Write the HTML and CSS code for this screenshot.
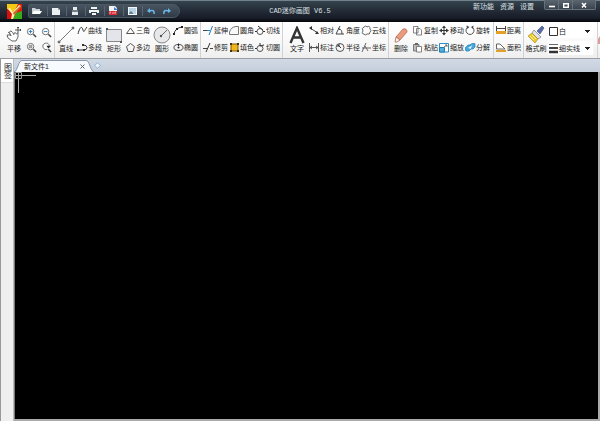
FILE: index.html
```html
<!DOCTYPE html>
<html lang="zh-CN">
<head>
<meta charset="utf-8">
<title>CAD迷你画图 V6.5</title>
<link rel="stylesheet" href="styles.css">
</head>
<body>
<header class="titlebar">
  <div class="quick">
    <svg class="logo" viewBox="0 0 15 15" aria-hidden="true"><rect width="15" height="15" fill="#e01b10"/><path d="M0 0H11L7 8L0 5Z" fill="#f5c911"/><path d="M0 5L7 9L5 15H0Z" fill="#d80f0b"/><path d="M15 7V15H6L9 9Z" fill="#38a818"/><path d="M1 5L3 4L6 8L12 1L14 2L8 10L6 15H4L5 10Z" fill="#fff3b0"/><path d="M6 9L13 2L14 3L7 11Z" fill="#c66a22"/></svg>
    <nav class="pill" aria-label="快速访问">
      <button aria-label="打开"><svg viewBox="0 0 12 10"><path d="M1 8V2H4L5 3H9V5" fill="#cbd2d8"/><path d="M1 8L3 5H11L9 8Z" fill="#fff"/></svg></button>
      <button aria-label="新建"><svg viewBox="0 0 12 10"><path d="M2 2H8L10 4V9H2Z" fill="#eceff1"/><path d="M8 2V4H10" fill="#9aa3ab"/></svg></button>
      <button aria-label="保存"><svg viewBox="0 0 12 10"><path d="M4 1H8V4H4ZM3 6H9V9H3Z" fill="#e6eaed"/><path d="M3 4H9V6H3Z" fill="#737f89"/></svg></button>
      <button aria-label="打印"><svg viewBox="0 0 12 10"><path d="M3 1H9V3H3ZM1 4H11V7H9V6H3V7H1ZM4 7H8V9H4Z" fill="#f1f4f5"/></svg></button>
      <button aria-label="导出PDF"><svg viewBox="0 0 12 10"><path d="M2 0H8L10 2V9H2Z" fill="#f2f3f5"/><path d="M7 1L11 4H7Z" fill="#4a7bd0"/><path d="M2 5H10V9H2Z" fill="#dd2931"/><path d="M3 8V6H4M6 6V8M8 8V6H9" stroke="#fff" fill="none" stroke-width=".6"/></svg></button>
      <button aria-label="导出图片"><svg viewBox="0 0 12 10"><path d="M2 1H11V9H2Z" fill="#f3f6f8"/><path d="M3 2H10V8H3Z" fill="#b8d3e3"/><path d="M3 7L5 5L7 7V8H3Z" fill="#668394"/></svg></button>
      <button aria-label="撤销"><svg viewBox="0 0 12 10"><path d="M9 8Q10 3 4 5" stroke="#69b8ec" stroke-width="1.6" fill="none"/><path d="M2 5L5 2V7Z" fill="#69b8ec"/></svg></button>
      <button aria-label="重做"><svg viewBox="0 0 12 10"><path d="M3 8Q2 3 8 5" stroke="#69b8ec" stroke-width="1.6" fill="none"/><path d="M10 5L7 2V7Z" fill="#69b8ec"/></svg></button>
    </nav>
  </div>
  <h1>CAD迷你画图 V6.5</h1>
  <div class="right">
    <nav class="links"><a href="#new">新功能</a><a href="#res">资源</a><a href="#set">设置</a></nav>
    <div class="window">
      <button aria-label="最小化"><svg viewBox="0 0 10 8"><path d="M2 5.5H8" stroke="#fff" stroke-width="1.6"/></svg></button>
      <button aria-label="最大化"><svg viewBox="0 0 10 8"><path d="M2.7 2.7H7.3V6.3H2.7Z" stroke="#fff" stroke-width="1.4" fill="none"/></svg></button>
      <button class="close" aria-label="关闭"><svg viewBox="0 0 10 8"><path d="M3 2L7 6.5M7 2L3 6.5" stroke="#fff" stroke-width="1.5"/></svg></button>
    </div>
  </div>
</header>

<section class="ribbon" aria-label="工具栏">
  <div class="group view">
    <button class="big"><svg viewBox="0 0 18 18"><path d="M3 6Q5 7 6 10Q3 5 6 5Q8 6 9 9M9 8Q9 6 11 7M11 8L13 7V11L11 15H7L3 12L2 9L5 9" fill="#fff" stroke="#666"/><path d="M13 1V7M10 4H16M12 2L13 1L14 2M15 3L16 4L15 5" fill="none" stroke="#444" stroke-width=".9"/></svg><span>平移</span></button>
    <div class="zooms">
      <button aria-label="放大"><svg viewBox="0 0 12 12"><circle cx="5" cy="5" r="3.5" fill="#fff" stroke="#666"/><path d="M3 5H7M5 3V7" stroke="#2773ad"/><path d="M8 8L11 11" stroke="#444" stroke-width="1.6"/></svg></button>
      <button aria-label="缩小"><svg viewBox="0 0 12 12"><circle cx="5" cy="5" r="3.5" fill="#fff" stroke="#666"/><path d="M3 5H7" stroke="#2773ad"/><path d="M8 8L11 11" stroke="#444" stroke-width="1.6"/></svg></button>
      <button aria-label="窗口缩放"><svg viewBox="0 0 12 12"><circle cx="5" cy="5" r="3.5" fill="#fff" stroke="#666"/><path d="M3.5 3.5H6.5V6.5H3.5Z" fill="#aaa" stroke="#777" stroke-width=".6"/><path d="M8 8L11 11" stroke="#444" stroke-width="1.6"/></svg></button>
      <button aria-label="上次视图"><svg viewBox="0 0 12 12"><path d="M7 8A3.5 3.5 0 1 1 9 4" fill="#fff" stroke="#666"/><path d="M6 4L11 4L8 7Z" fill="#222"/><path d="M8 8L11 11" stroke="#444" stroke-width="1.6"/></svg></button>
    </div>
  </div>

  <div class="group draw">
    <button class="big"><svg viewBox="0 0 18 18"><path d="M2 16L16 2" stroke="#777"/><path d="M1 15H3V17H1ZM15 1H17V3H15Z" fill="#777" stroke="#666" stroke-width=".5"/></svg><span>直线</span></button>
    <div class="stack">
      <button><svg viewBox="0 0 11 11"><path d="M1 9C3 1 5 1 6 5S8 4 10 2" fill="none" stroke="#333"/></svg>曲线</button>
      <button><svg viewBox="0 0 11 11"><path d="M1 8H7Q10 8 10 5.500T6 3" fill="none" stroke="#333"/><path d="M0 7H2V9H0ZM5 2H7V4H5ZM6 7H8V9H6Z" fill="#333"/></svg>多段</button>
    </div>
    <button class="big"><svg viewBox="0 0 18 18"><path d="M1.500 3.500H16.500V15.500H1.500Z" fill="#e3e5ea" stroke="#888"/><path d="M1 2H3V4H1ZM15 15H17V17H15Z" fill="#555"/></svg><span>矩形</span></button>
    <div class="stack">
      <button><svg viewBox="0 0 11 11"><path d="M1.500 8.500L5.500 3L9.500 8.500Z" fill="none" stroke="#555"/></svg>三角</button>
      <button><svg viewBox="0 0 11 11"><path d="M5.500 1.500L9.500 4.500L8 9.500H3L1.500 4.500Z" fill="none" stroke="#555"/></svg>多边</button>
    </div>
    <button class="big"><svg viewBox="0 0 18 18"><circle cx="9" cy="9" r="8" fill="#e6e8ea" stroke="#888"/><path d="M8 10L14 4" stroke="#666"/><circle cx="8" cy="10" r="1.2" fill="#555"/></svg><span>圆形</span></button>
    <div class="stack">
      <button><svg viewBox="0 0 11 11"><path d="M1 9Q2 3 9 2" fill="none" stroke="#333"/><path d="M0 8H2V10H0ZM3 3H5V5H3ZM8 1H10V3H8Z" fill="#222"/></svg>圆弧</button>
      <button><svg viewBox="0 0 11 11"><ellipse cx="5.500" cy="5.500" rx="4.500" ry="3" fill="none" stroke="#444"/><circle cx="5.500" cy="5.500" r="1" fill="#222"/><path d="M5.500 1.500V4" stroke="#222"/></svg>椭圆</button>
    </div>
  </div>

  <div class="group">
    <div class="stack">
      <button><svg viewBox="0 0 11 11"><path d="M0 5.500H4" stroke="#444"/><path d="M4 5.500H7" stroke="#1d8bd1"/><path d="M9.500 1L6 10" stroke="#1d7bc1"/></svg>延伸</button>
      <button><svg viewBox="0 0 11 11"><path d="M0 6.500H4M7 6.500H10" stroke="#444"/><path d="M7 1L3 10" stroke="#333"/></svg>修剪</button>
    </div>
    <div class="stack">
      <button><svg viewBox="0 0 11 11"><path d="M.5 9.500V7Q2 2 7 1.500H9.500V9.500Z" fill="#f8f8f8" stroke="#777"/></svg>圆角</button>
      <button><svg viewBox="0 0 11 11"><path d="M2 2H9V9H2Z" fill="#f1b51c" stroke="#7c5a09"/><path d="M1 1H3V3H1ZM8 1H10V3H8ZM1 8H3V10H1ZM8 8H10V10H8Z" fill="#443108"/></svg>填色</button>
    </div>
    <div class="stack">
      <button><svg viewBox="0 0 11 11"><circle cx="5" cy="6.500" r="3" fill="none" stroke="#555"/><path d="M3 1L8 5M8 6.500H10M0 6.500H2" stroke="#333" fill="none"/></svg>切线</button>
      <button><svg viewBox="0 0 11 11"><circle cx="5" cy="6.500" r="3" fill="none" stroke="#555"/><path d="M5 1V4L9 3M0 6.500H2" stroke="#333" fill="none"/></svg>切圆</button>
    </div>
  </div>

  <div class="group">
    <button class="big"><svg viewBox="0 0 18 18"><path d="M2.500 17L9 2L15.500 17M5 11.500H13" fill="none" stroke="#333" stroke-width="2.400"/></svg><span>文字</span></button>
    <div class="stack">
      <button><svg viewBox="0 0 11 11"><path d="M1 3L9 8" stroke="#444"/><path d="M0 3L3 1V5ZM10 9L6 9L8 6Z" fill="#333"/></svg>相对</button>
      <button><svg viewBox="0 0 11 11"><path d="M.5 1V10M9.500 1V10M1 5.500H9M3 4L1 5.500L3 7M7 4L9 5.500L7 7" fill="none" stroke="#444" stroke-width=".9"/></svg>标注</button>
    </div>
    <div class="stack">
      <button><svg viewBox="0 0 11 11"><path d="M5 1L1 9H9M4 4Q7 4 7 9M3 3L5 5" fill="none" stroke="#444"/></svg>角度</button>
      <button><svg viewBox="0 0 11 11"><circle cx="5" cy="5.500" r="4" fill="none" stroke="#555"/><path d="M6 6L3 3M3 5V3H5" fill="none" stroke="#333"/></svg>半径</button>
    </div>
    <div class="stack">
      <button><svg viewBox="0 0 11 11"><path d="M3 2Q5 0 6 2Q9 0 9 4Q11 6 9 7Q9 10 6 9Q4 11 3 9Q0 9 2 6Q0 3 3 2Z" fill="none" stroke="#666"/></svg>云线</button>
      <button><svg viewBox="0 0 11 11"><path d="M5 1L1 10M1 6H10M4 4L7 9" fill="none" stroke="#666"/></svg>坐标</button>
    </div>
  </div>

  <div class="group edit">
    <button class="big"><svg viewBox="0 0 18 18"><path d="M4 11L11 3Q15 2 15 6L8 14Z" fill="#eb9b7d" stroke="#b56b55" stroke-width=".8"/><path d="M4 11L8 14L5 16H3Z" fill="#fff3ec" stroke="#a56550" stroke-width=".8"/></svg><span>删除</span></button>
    <div class="stack">
      <button><svg viewBox="0 0 11 11"><path d="M.5 1.500H5V8H.5ZM3.500 3.500H7L8.500 5V10H3.500Z" fill="#fff" stroke="#666" stroke-width=".8"/></svg>复制</button>
      <button><svg viewBox="0 0 11 11"><path d="M.5 2.500H6V9H.5Z" fill="#bbb" stroke="#666" stroke-width=".8"/><path d="M2 1H5V3H2Z" fill="#666"/><path d="M3.500 4.500H8.500V10H3.500Z" fill="#fff" stroke="#666" stroke-width=".8"/></svg>粘贴</button>
    </div>
    <div class="stack">
      <button><svg viewBox="0 0 11 11"><path d="M5 2V9M2 5.500H8" stroke="#333"/><path d="M5 .5L7 3H3ZM5 10.500L7 8H3ZM0 5.500L3 3.500V7.500ZM10 5.500L7 3.500V7.500Z" fill="#333"/></svg>移动</button>
      <button><svg viewBox="0 0 11 11"><path d="M.5 1.500H9.500V10H.5Z" fill="#fff" stroke="#2f8fc4"/><path d="M.5 5.500H5.500V10H.5Z" fill="#4eb0df" stroke="#277ba9"/><path d="M5 5L8 3M6 3H8V5" fill="none" stroke="#555" stroke-width=".8"/></svg>缩放</button>
    </div>
    <div class="stack">
      <button><svg viewBox="0 0 11 11"><path d="M3 2A4 4 0 1 0 7 2" fill="none" stroke="#555"/><path d="M1.500 .5L4.500 2L2 4ZM8.500 .5L6 2L8 4Z" fill="#444"/></svg>旋转</button>
      <button><svg viewBox="0 0 11 11"><path d="M0 6L3 3H6V7L4 9H1ZM5 3L7 1.500H10V5L8 7H6Z" fill="#45a9df" stroke="#237eb1" stroke-width=".7"/><path d="M3 6L7 3L6 7Z" fill="#d9f3ff"/></svg>分解</button>
    </div>
  </div>

  <div class="group">
    <div class="stack">
      <button><svg viewBox="0 0 11 11"><path d="M.5 3.500H9.500M.5 1V6M9.500 1V6" stroke="#444"/><path d="M0 6H10V9H0Z" fill="#e3a027"/></svg>距离</button>
      <button><svg viewBox="0 0 11 11"><path d="M.5 7V2H4L9 7Z" fill="#fff" stroke="#666"/><path d="M0 8H10V10H0Z" fill="#e3a027"/></svg>面积</button>
    </div>
  </div>

  <div class="group format">
    <button class="big"><svg viewBox="0 0 18 18"><path d="M10 5L15 0L17 2L13 8Z" fill="#576ba5" stroke="#35477c" stroke-width=".6"/><path d="M7 4L14 11L11 13L5 7Z" fill="#dde2ed" stroke="#777" stroke-width=".7"/><path d="M5 7L11 13L8 17L1 10Z" fill="#efc928" stroke="#a18a31" stroke-width=".6"/><path d="M3 10L7 14M5 9L9 13" stroke="#fff195"/></svg><span>格式刷</span></button>
    <div class="picks">
      <label class="pick"><svg viewBox="0 0 11 11"><path d="M1.500 1.500H9.500V9.500H1.500Z" fill="#fff" stroke="#333"/></svg><select aria-label="颜色"><option>白</option></select></label>
      <label class="pick"><svg viewBox="0 0 11 11"><path d="M1 1.500H10" stroke="#666"/><path d="M1 5H10" stroke="#444" stroke-width="2"/><path d="M1 9H10" stroke="#333" stroke-width="2.500"/></svg><select aria-label="线型"><option>细实线</option></select></label>
    </div>
  </div>
  <div class="more"><svg viewBox="0 0 2 8" aria-hidden="true"><path d="M2 0V8H0V3Z" fill="#d6a095"/></svg></div>
</section>

<div class="workspace">
  <aside><button class="side">图签</button></aside>
  <main>
    <div class="tabs">
      <svg class="edge" viewBox="0 0 8 12" aria-hidden="true"><path d="M0 12Q2 12 4 6T8 .5V12Z" fill="#f7fafe"/><path d="M0 12Q2 12 4 6T8 .5" fill="none" stroke="#8b98a8"/></svg>
      <div class="tab"><span>新文件1</span><button aria-label="关闭标签"><svg viewBox="0 0 5 5"><path d="M.5 .5L4.500 4.500M4.500 .5L.5 4.500" stroke="#666"/></svg></button></div>
      <svg class="edge" viewBox="0 0 8 12" aria-hidden="true"><path d="M0 .5Q2 0 4 6T8 12H0Z" fill="#f7fafe"/><path d="M0 .5Q2 0 4 6T8 12" fill="none" stroke="#8b98a8"/></svg>
      <button class="add" aria-label="新建标签"><svg viewBox="0 0 7 7"><path d="M3.500 .7L6.300 3.500L3.500 6.300L.7 3.500Z" fill="#edf5ff" stroke="#91afd0"/></svg></button>
    </div>
    <div class="canvas">
      <svg class="cursor" viewBox="0 0 21 21" aria-hidden="true"><path d="M3.500 0V21M0 3.500H21" stroke="#aaa"/><path d="M.5 .5H6.500V6.500H.5Z" fill="none" stroke="#999"/></svg>
    </div>
  </main>
</div>
</body>
</html>
```

FILE: styles.css
```css
* { box-sizing: border-box; }
body {
  margin: 0;
  min-height: 100vh;
  display: flex;
  flex-direction: column;
  background: #f0f0f0;
  color: #222;
  font: 7px/9px "Liberation Sans", "Noto Sans CJK SC", sans-serif;
}
button, select {
  margin: 0;
  padding: 0;
  border: 0;
  background: none;
  color: inherit;
  font: inherit;
}
svg { display: block; flex: none; }

.titlebar {
  height: 22px;
  display: grid;
  grid-template-columns: 1fr auto 1fr;
  background: linear-gradient(#71828d 0 1px, #34434d 1px, #252d38 45%, #191e29 80%, #05070a);
  color: #dde2e6;
}
.titlebar h1 {
  margin: 0;
  font: 7px/22px "Liberation Mono", "Noto Sans CJK SC", monospace;
}
.quick { display: flex; align-items: flex-start; padding: 4px 0 0 7px; gap: 6px; }
.logo { width: 15px; height: 15px; }
.pill {
  display: flex;
  align-items: center;
  height: 14px;
  padding-right: 4px;
  border: 1px solid #4c5964;
  border-radius: 2px 7px 7px 2px;
  background: linear-gradient(#485561, #303a47);
}
.pill button { width: 16px; padding: 0 2px; }
.pill button:nth-child(-n+6) { width: 19px; padding: 0 3px 0 2px; border-right: 1px solid #596571; }
.pill svg { width: 12px; height: 10px; }
.right { display: flex; justify-content: flex-end; gap: 10px; padding-right: 4px; }
.links { display: flex; gap: 6px; padding-top: 2px; }
.links a { color: inherit; text-decoration: none; }
.window { display: flex; height: 10px; border: 1px solid #65717b; border-top: 0; border-radius: 0 0 2px 2px; background: linear-gradient(#5b6670, #39434d); }
.window button { width: 14px; padding: 0 2px; border-right: 1px solid #65717b; }
.window .close { width: 22px; padding: 0 6px; border: 0; }
.window svg { width: 10px; height: 8px; }

.ribbon {
  height: 37px;
  display: flex;
  overflow: hidden;
  background: linear-gradient(#fff, #f8f8f8 60%, #eee);
  border-bottom: 1px solid #9b9fa5;
}
.group { display: flex; flex: none; padding: 0 1px 0 2px; border-right: 1px solid #d2d2d2; }
.big {
  width: 24px;
  display: flex;
  flex-direction: column;
  align-items: center;
  padding-top: 4px;
  white-space: nowrap;
}
.big svg { width: 18px; height: 18px; }
.stack { width: 26px; display: grid; grid-template-rows: 17px 17px; }
.stack button { display: flex; align-items: center; white-space: nowrap; }
.stack svg { width: 11px; height: 11px; }
.view { padding-right: 0; }
.zooms { width: 28px; display: grid; grid-template: 15px 15px / 15px 13px; padding-top: 3px; }
.zooms svg { width: 11px; height: 11px; }
.draw { padding: 0 1px 0 0; }
.draw .big { width: 22px; }
.edit { padding: 0 2px 0 0; }
.format { flex: 1; padding: 0 4px 0 0; }
.picks { flex: 1; display: grid; grid-template-rows: 14px 14px; align-content: start; gap: 3px; padding-top: 2px; }
.pick { display: flex; align-items: center; background: #fff; }
.pick svg { width: 11px; height: 11px; }
.pick select {
  flex: 1;
  min-width: 0;
  height: 14px;
  appearance: none;
  background: conic-gradient(from 315deg at 50% 100%, #222 90deg, transparent 0) no-repeat right 3px center / 5px 3px;
}
.more { display: flex; align-items: center; width: 2px; }
.more svg { width: 2px; height: 8px; }

.workspace { flex: 1; display: flex; }
aside { width: 14px; border-left: 1px solid #999; border-right: 1px solid #bbb; background: #efefef; }
.side { display: block; width: 12px; height: 24px; background: #fff; border-bottom: 1px solid #ddd; font-size: 8px; writing-mode: vertical-rl; }
main { flex: 1; display: flex; flex-direction: column; padding: 0 2px 2px 0; background: #aaa; }
.tabs { display: flex; align-items: flex-end; height: 13px; margin-right: -2px; background: linear-gradient(#d1d9e4, #c4ceda); }
.edge { width: 8px; height: 12px; }
.tab { display: flex; align-items: center; justify-content: space-between; width: 64px; height: 12px; padding: 0 1px 0 2px; border-top: 1px solid #8b98a8; background: #f7fafe; }
.tab svg { width: 5px; height: 5px; }
.add { align-self: center; }
.add svg { width: 7px; height: 7px; }
.canvas { flex: 1; background: #000; border-left: 1px solid #777; }
.cursor { width: 21px; height: 21px; }
```
